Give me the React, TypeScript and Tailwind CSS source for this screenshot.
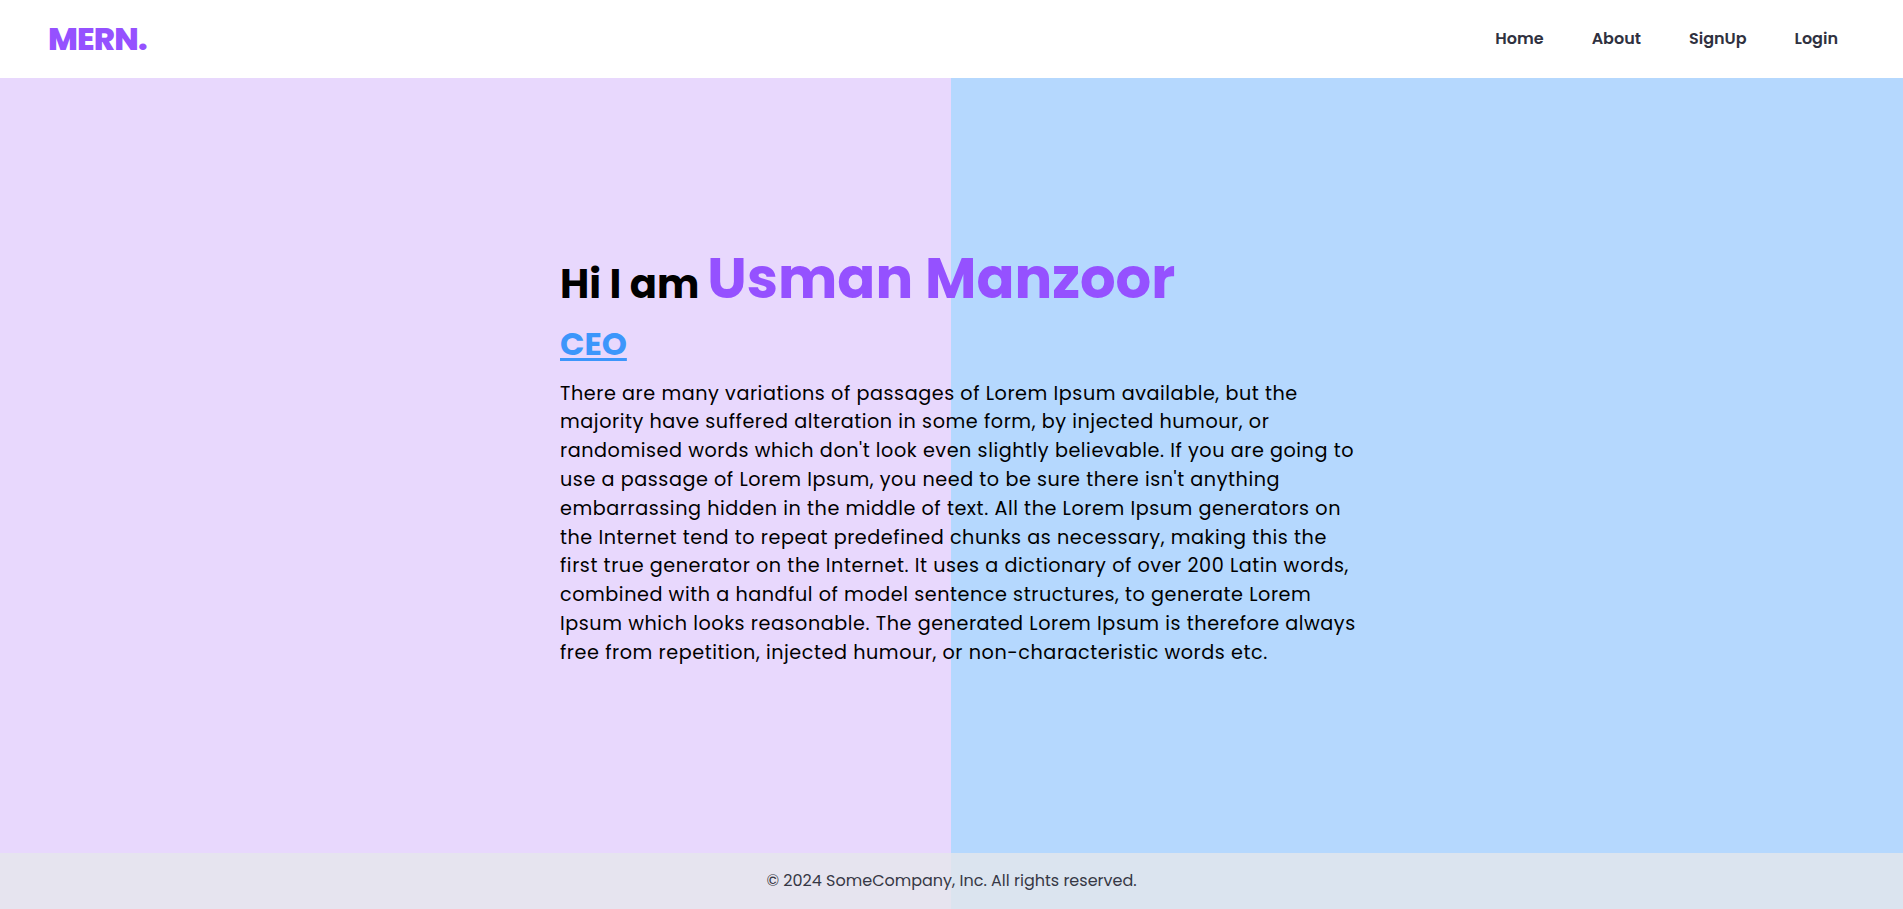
const FONT = "font-['Poppins','Open_Sans',sans-serif]";

const links = ["Home", "About", "SignUp", "Login"];

const bio =
  "There are many variations of passages of Lorem Ipsum available, but the majority have suffered alteration in some form, by injected humour, or randomised words which don't look even slightly believable. If you are going to use a passage of Lorem Ipsum, you need to be sure there isn't anything embarrassing hidden in the middle of text. All the Lorem Ipsum generators on the Internet tend to repeat predefined chunks as necessary, making this the first true generator on the Internet. It uses a dictionary of over 200 Latin words, combined with a handful of model sentence structures, to generate Lorem Ipsum which looks reasonable. The generated Lorem Ipsum is therefore always free from repetition, injected humour, or non-characteristic words etc.";

export default function App() {
  return (
    <div
      className={`${FONT} flex h-[909px] flex-col bg-[linear-gradient(to_right,#e8d8fd_50%,#b5d8fe_50%)]`}
    >
      {/* Header */}
      <header className="flex h-[78px] shrink-0 items-center justify-between bg-white pl-12 pr-[65px]">
        <span className="text-[32px] font-extrabold leading-none tracking-tight text-[#9551ff]">
          MERN.
        </span>
        <nav className="flex items-center gap-12">
          {links.map((l) => (
            <a key={l} href="#" className="text-[16px] font-semibold text-[#2f3140]">
              {l}
            </a>
          ))}
        </nav>
      </header>

      {/* Hero */}
      <main className="flex flex-1 items-center">
        <div className="mb-5 ml-[560px] w-[800px]">
          <h1 className="flex items-baseline gap-2 font-bold leading-tight">
            <span className="text-[40px] text-black">Hi I am</span>
            <span className="text-[56px] text-[#9551ff]">Usman Manzoor</span>
          </h1>
          <h2 className="mt-[10px] text-[32px] font-bold leading-tight text-[#3c96fb] underline decoration-[3px] underline-offset-[3px]">
            CEO
          </h2>
          <p className="mt-4 text-[19.2px] leading-[28.8px] tracking-[0.55px] text-black">{bio}</p>
        </div>
      </main>

      {/* Footer */}
      <footer className="flex h-14 shrink-0 items-center justify-center bg-gray-200/80">
        <p className="text-[16px] text-[#363845]">© 2024 SomeCompany, Inc. All rights reserved.</p>
      </footer>
    </div>
  );
}
